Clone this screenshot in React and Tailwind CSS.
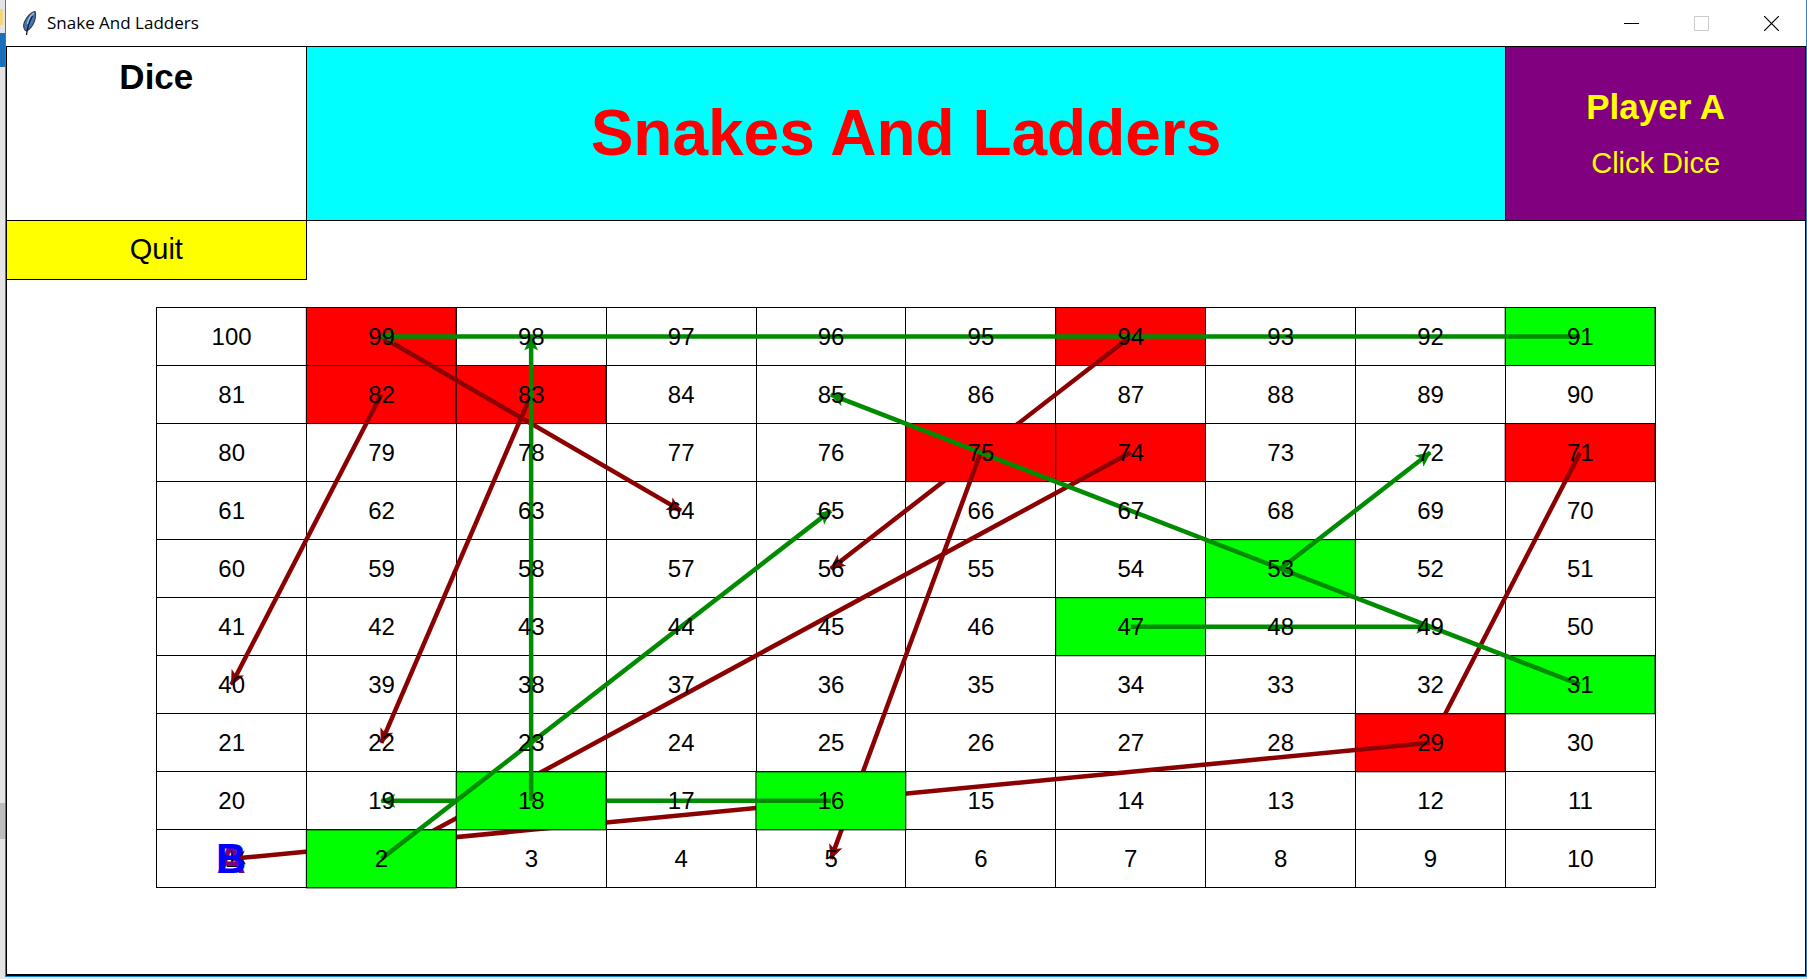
import React from "react";

const SNAKES = [
  [94, 56],
  [75, 5],
  [71, 29],
  [29, 1],
  [74, 2],
  [82, 40],
  [83, 22],
  [99, 64],
];

const LADDERS = [
  [16, 19],
  [18, 98],
  [2, 65],
  [47, 49],
  [53, 72],
  [31, 85],
  [91, 99],
];

// The board runs back and forth from the bottom row up.
function place(n) {
  const level = Math.floor((n - 1) / 10);
  const step = (n - 1) % 10;
  return { row: 9 - level, col: level % 2 === 0 ? step : 9 - step };
}

const NUMBERS = Array.from({ length: 100 }, (_, i) => {
  const row = Math.floor(i / 10);
  const col = i % 10;
  const level = 9 - row;
  return level * 10 + (level % 2 === 0 ? col + 1 : 10 - col);
});

const centre = (i) => `${i * 10 + 5}%`;

function Jump({ from, to, fill, stroke, head }) {
  const a = place(from);
  const b = place(to);
  return (
    <g>
      <rect
        x={`${a.col * 10}%`}
        y={`${a.row * 10}%`}
        width="10%"
        height="10%"
        fill={fill}
        stroke="#000"
        strokeWidth="1"
      />
      <line
        x1={centre(a.col)}
        y1={centre(a.row)}
        x2={centre(b.col)}
        y2={centre(b.row)}
        stroke={stroke}
        strokeWidth="4.500"
        markerEnd={`url(#${head})`}
      />
    </g>
  );
}

function Head({ id, color }) {
  return (
    <marker id={id} markerUnits="userSpaceOnUse" markerWidth="18" markerHeight="16" refX="14" refY="8" orient="auto">
      <path d="M15 8L0 1L3.500 8L0 15Z" fill={color} />
    </marker>
  );
}

function Board() {
  return (
    <div className="relative mx-[8.3%] grow-[582] basis-0">
      <div className="absolute inset-0 grid grid-cols-10 grid-rows-10 border-r border-b border-black">
        {NUMBERS.map((n) => (
          <div key={n} className="flex min-h-0 items-center justify-center border-t border-l border-black pt-px">
            <span className="relative z-10 text-2xl leading-6">{n}</span>
          </div>
        ))}
      </div>
      <div className="absolute inset-0 pr-px pb-px">
        <svg className="h-full w-full overflow-visible" aria-hidden="true">
          <defs>
            <Head id="snake-head" color="#8b0000" />
            <Head id="ladder-head" color="#008b00" />
          </defs>
          <g transform="translate(0.500 0.500)">
            {SNAKES.map(([from, to]) => (
              <Jump key={from} from={from} to={to} fill="#ff0000" stroke="#8b0000" head="snake-head" />
            ))}
            {LADDERS.map(([from, to]) => (
              <Jump key={from} from={from} to={to} fill="#00ff00" stroke="#008b00" head="ladder-head" />
            ))}
          </g>
        </svg>
      </div>
      <div className="absolute bottom-0 left-0 z-20 grid h-1/10 w-1/10 place-items-center leading-none font-bold">
        <span className="col-start-1 row-start-1 text-[40px] text-[#800080]">A</span>
        <span className="col-start-1 row-start-1 text-[42px] text-[#0000ff]">B</span>
      </div>
    </div>
  );
}

function Feather() {
  return (
    <svg width="15" height="25" viewBox="0 0 15 25" aria-hidden="true">
      <path d="M13 0.500C9 1 4.500 6 2.500 11C1.300 14 1.500 17 3 19L4.500 20C8 18 11 14.500 12.500 10C13.500 6.500 14 3 13 0.500Z" fill="#3f78bd" stroke="#3a3f48" strokeWidth="1.200" />
      <path d="M12 2C9 4 6.500 8 5.500 13" fill="none" stroke="#9dc0e8" strokeWidth="1.500" />
      <path d="M10.500 5C7.500 10 5.500 15 4.500 24" fill="none" stroke="#15181d" strokeWidth="1.300" />
    </svg>
  );
}

function TitleBar() {
  return (
    <header className="flex h-[46px] shrink-0 items-center bg-white pl-4">
      <Feather />
      <span className="ml-2.5 grow font-['Open_Sans','Noto_Sans',sans-serif] text-[17px] leading-6">Snake And Ladders</span>
      <button type="button" aria-label="Minimize" className="grid h-11 w-[70px] place-items-center">
        <svg width="15" height="15" viewBox="0 0 15 15" shapeRendering="crispEdges">
          <path d="M0 7.500H15" stroke="#000" />
        </svg>
      </button>
      <button type="button" aria-label="Maximize" disabled className="grid h-11 w-[70px] place-items-center">
        <svg width="15" height="15" viewBox="0 0 15 15" shapeRendering="crispEdges">
          <path d="M0.500 0.500H14.500V14.500H0.500Z" fill="none" stroke="#ccc" />
        </svg>
      </button>
      <button type="button" aria-label="Close" className="grid h-11 w-[70px] place-items-center">
        <svg width="15" height="15" viewBox="0 0 15 15">
          <path d="M0 0L15 15M15 0L0 15" stroke="#000" strokeWidth="1.200" />
        </svg>
      </button>
    </header>
  );
}

export default function App() {
  return (
    <div className="flex h-screen w-full bg-[#e4e4e4] pb-[2px] font-['Liberation_Sans',Arial,sans-serif] text-black">
      <div className="flex w-[5px] shrink-0 flex-col" aria-hidden="true">
        <div className="flex h-[33px] items-center">
          <div className="h-4 w-[3px] bg-[#f3d67c]" />
        </div>
        <div className="h-[34px] bg-[#1a6fb8]" />
        <div className="grow" />
        <div className="h-9 bg-[#bdbdbd]" />
        <div className="h-[138px]" />
      </div>
      <div className="flex min-w-0 grow flex-col border-x border-b border-[#1883d7] bg-white">
        <TitleBar />
        <main className="flex grow flex-col border border-b-2 border-black">
          <div className="grid grow-[173] basis-0 grid-cols-12 border-b border-black">
            <section className="col-span-2 border-r border-black pt-2.5 text-center">
              <h2 className="text-[35px] leading-10 font-bold">Dice</h2>
            </section>
            <section className="col-span-8 flex items-center justify-center bg-[#00ffff]">
              <h1 className="text-[64px] leading-none font-bold text-[#ff0000]">Snakes And Ladders</h1>
            </section>
            <section className="col-span-2 flex flex-col items-center justify-center gap-4 border-l border-black bg-[#800080] pt-1 text-[#ffff00]">
              <h2 className="text-[35px] leading-10 font-bold">Player A</h2>
              <p className="text-[29px] leading-10">Click Dice</p>
            </section>
          </div>
          <div className="grid grow-[59] basis-0 grid-cols-12">
            <button type="button" className="col-span-2 border-r border-b border-black bg-[#ffff00] text-[29px]">
              Quit
            </button>
          </div>
          <div className="grow-[27] basis-0" />
          <Board />
          <div className="grow-[86] basis-0" />
        </main>
      </div>
    </div>
  );
}
